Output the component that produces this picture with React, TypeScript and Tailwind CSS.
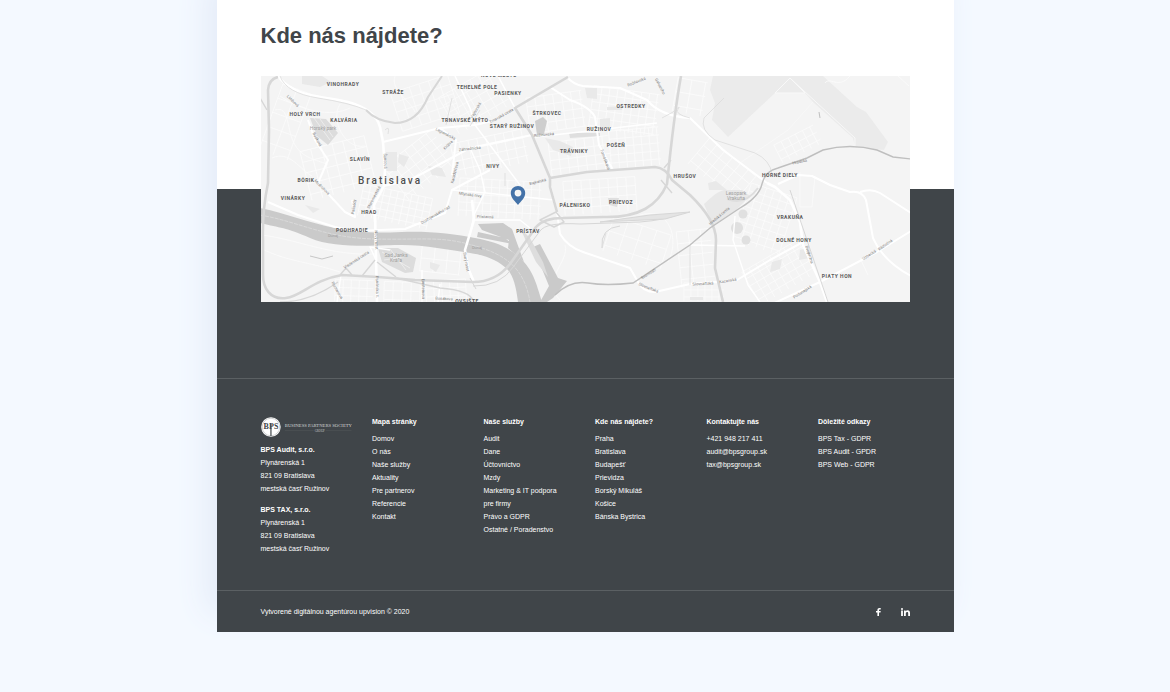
import type { ReactNode } from "react";

type Label = { text: string; x: number; y: number };

const districts: Label[] = [
    { text: "VINOHRADY", x: 343, y: 86 },
    { text: "STRÁŽE", x: 393, y: 94 },
    { text: "TEHELNÉ POLE", x: 477, y: 89 },
    { text: "PASIENKY", x: 508, y: 95 },
    { text: "HOLÝ VRCH", x: 305, y: 116 },
    { text: "KALVÁRIA", x: 344, y: 122 },
    { text: "TRNAVSKÉ MÝTO", x: 465, y: 122 },
    { text: "STARÝ RUŽINOV", x: 512, y: 128 },
    { text: "ŠTRKOVEC", x: 547, y: 115 },
    { text: "OSTREDKY", x: 631, y: 108 },
    { text: "RUŽINOV", x: 599, y: 131 },
    { text: "POŠEŇ", x: 616, y: 147 },
    { text: "TRÁVNIKY", x: 574, y: 153 },
    { text: "SLAVÍN", x: 360, y: 161 },
    { text: "NIVY", x: 493, y: 168 },
    { text: "BÔRIK", x: 306, y: 182 },
    { text: "VINÁRKY", x: 293, y: 200 },
    { text: "HRAD", x: 369, y: 214 },
    { text: "PODHRADIE", x: 352, y: 232 },
    { text: "PRÍSTAV", x: 528, y: 233 },
    { text: "PÁLENISKO", x: 575, y: 207 },
    { text: "PRIEVOZ", x: 621, y: 204 },
    { text: "HRUŠOV", x: 685, y: 178 },
    { text: "HORNÉ DIELY", x: 780, y: 177 },
    { text: "VRAKUŇA", x: 790, y: 219 },
    { text: "DOLNÉ HONY", x: 794, y: 242 },
    { text: "PIATY HON", x: 837, y: 278 },
    { text: "NOVÉ MESTO", x: 499, y: 77 },
    { text: "OVSIŠTE", x: 467, y: 303 },
];

const streets: (Label & { angle: number })[] = [
    { text: "Limbová", x: 292, y: 102, angle: 45 },
    { text: "Búdková", x: 316, y: 140, angle: 62 },
    { text: "Mudroňova", x: 321, y: 188, angle: 45 },
    { text: "Šancová", x: 384, y: 161, angle: 88 },
    { text: "Legionárska", x: 445, y: 135, angle: 27 },
    { text: "Krížna", x: 449, y: 146, angle: -45 },
    { text: "Záhradnícka", x: 470, y: 150, angle: -6 },
    { text: "Karadžičova", x: 456, y: 173, angle: -76 },
    { text: "Palisády", x: 355, y: 207, angle: -82 },
    { text: "Staromestská", x: 375, y: 198, angle: -62 },
    { text: "Dostojevského rad", x: 436, y: 216, angle: -30 },
    { text: "Mlynské nivy", x: 470, y: 196, angle: 7 },
    { text: "Prístavná", x: 485, y: 218, angle: 2 },
    { text: "Viedenská cesta", x: 357, y: 261, angle: -33 },
    { text: "Nový most", x: 375, y: 240, angle: 88 },
    { text: "Panónska c.", x: 376, y: 287, angle: 89 },
    { text: "Einsteinova", x: 422, y: 289, angle: 89 },
    { text: "Starý most", x: 465, y: 262, angle: 80 },
    { text: "Bosákova", x: 444, y: 300, angle: 3 },
    { text: "Romanova", x: 336, y: 291, angle: 60 },
    { text: "Vajnorská", x: 477, y: 111, angle: -60 },
    { text: "Trnavská cesta", x: 502, y: 117, angle: -29 },
    { text: "Tomášikova", x: 604, y: 160, angle: 70 },
    { text: "Ružinovská", x: 544, y: 136, angle: -5 },
    { text: "Bajkalská", x: 538, y: 183, angle: -14 },
    { text: "Rožňavská", x: 637, y: 83, angle: -22 },
    { text: "Galvaniho", x: 659, y: 87, angle: 62 },
    { text: "Hradská", x: 800, y: 163, angle: -12 },
    { text: "Hradská cesta", x: 720, y: 217, angle: -40 },
    { text: "Slovnaftská", x: 648, y: 289, angle: 22 },
    { text: "Svornosti", x: 649, y: 275, angle: -33 },
    { text: "Slovnaftská", x: 703, y: 285, angle: -3 },
    { text: "Kazanská", x: 728, y: 282, angle: -9 },
    { text: "Dvojkrížna", x: 808, y: 255, angle: 72 },
    { text: "Uzbecká", x: 870, y: 256, angle: -33 },
    { text: "Ráztočná", x: 886, y: 246, angle: -35 },
    { text: "Podunajská", x: 803, y: 293, angle: -33 },
];

// neighbourhood street grids: centre, size, rotation and step between streets
const grids = [
    { x: 285, y: 122, w: 30, h: 70, angle: 20, step: 15 },
    { x: 338, y: 168, w: 66, h: 50, angle: -14, step: 11 },
    { x: 395, y: 207, w: 70, h: 32, angle: 12, step: 7 },
    { x: 420, y: 165, w: 60, h: 42, angle: -38, step: 9 },
    { x: 425, y: 103, w: 60, h: 40, angle: -18, step: 10 },
    { x: 475, y: 101, w: 60, h: 42, angle: -30, step: 9 },
    { x: 490, y: 153, w: 74, h: 34, angle: -12, step: 9 },
    { x: 500, y: 199, w: 82, h: 38, angle: 3, step: 8 },
    { x: 556, y: 112, w: 56, h: 36, angle: -8, step: 9 },
    { x: 624, y: 111, w: 66, h: 42, angle: 8, step: 8 },
    { x: 580, y: 156, w: 60, h: 34, angle: -7, step: 9 },
    { x: 635, y: 148, w: 50, h: 38, angle: -5, step: 8 },
    { x: 600, y: 196, w: 72, h: 34, angle: -4, step: 9 },
    { x: 637, y: 243, w: 60, h: 36, angle: 18, step: 15 },
    { x: 690, y: 97, w: 30, h: 34, angle: 10, step: 14 },
    { x: 722, y: 170, w: 60, h: 34, angle: 40, step: 10 },
    { x: 798, y: 144, w: 44, h: 20, angle: -27, step: 8 },
    { x: 765, y: 219, w: 48, h: 60, angle: 18, step: 8 },
    { x: 780, y: 272, w: 66, h: 38, angle: -30, step: 8 },
    { x: 696, y: 258, w: 34, h: 56, angle: -6, step: 12 },
    { x: 704, y: 292, w: 40, h: 18, angle: 0, step: 7 },
    { x: 354, y: 291, w: 38, h: 22, angle: 2, step: 8 },
    { x: 402, y: 292, w: 36, h: 20, angle: 2, step: 9 },
    { x: 446, y: 291, w: 40, h: 22, angle: -3, step: 8 },
    { x: 441, y: 260, w: 40, h: 26, angle: 6, step: 13 },
];

function gridPath(w: number, h: number, step: number) {
    let d = "";
    for (let x = -w / 2; x <= w / 2; x += step) d += `M${x} ${-h / 2}V${h / 2}`;
    for (let y = -h / 2; y <= h / 2; y += step) d += `M${-w / 2} ${y}H${w / 2}`;
    return d;
}

function CityMap() {
    return (
        <svg
            viewBox="261 76 649 226"
            role="img"
            aria-label="Mapa Bratislavy"
            className="block h-auto w-full font-[Roboto,sans-serif]"
        >
            <rect x="260" y="76" width="651" height="226" fill="#f4f4f4" />

            {/* airport */}
            <path
                fill="#ebebeb"
                d="M713 76H823L857 107L866 112L888 142L884 150L855 147L853 138L813 102L805 93H775L728 137L712 120L715 103L710 90Z"
            />
            <path fill="none" stroke="#f8f8f8" d="M775 93L790 78L805 93M790 78L855 138V147M813 102L788 130L740 163M775 93H805" />

            {/* side streets */}
            <g fill="none" stroke="#fbfbfb" strokeWidth="0.8">
                {grids.map((g) => (
                    <path
                        key={`${g.x}-${g.y}`}
                        d={gridPath(g.w, g.h, g.step)}
                        transform={`translate(${g.x} ${g.y}) rotate(${g.angle})`}
                    />
                ))}
                <path d="M275 110C290 105 286 130 295 145S320 160 328 165M280 96C300 110 330 118 350 108M272 158C290 150 300 170 312 176M340 104C330 120 345 150 365 146M262 235C300 240 330 256 375 254M395 76C390 90 410 100 415 112M264 250C290 262 310 262 340 272M640 215C670 206 680 240 668 262M565 245C570 262 540 280 560 300M800 172V207H812L815 176M825 83C830 76 838 90 850 76M898 76L909 86M860 258L868 275" />
            </g>

            {/* parks and built-up blocks */}
            <path fill="#e8e8e8" d="M704 204C711 198 716 192 724 190H742L750 196L735 211L713 226Z" />
            <path fill="none" stroke="#dedede" strokeWidth="2" d="M727 199Q745 206 758 188" />
            <path fill="#dcdcdc" d="M310 118L326 119L338 133L328 145L317 136Z" />
            <path fill="#dcdcdc" d="M378 248L398 248L416 258L413 272L405 273L382 262Z" />
            <path fill="none" stroke="#f0f0f0" strokeWidth="0.8" d="M314 118L330 140M320 119L333 137M382 252L410 268M390 249L406 270M384 260L408 256" />
            <path fill="#e9e9e9" d="M302 76H322L331 82L320 87L302 84ZM386 152H397V171H385ZM428 166L442 168L446 177L432 175ZM585 88H597V99L587 98ZM545 138L560 141L573 147L571 156L553 150ZM600 119L610 118V127H600ZM607 107L622 106V110H607ZM399 154L409 157L404 167L398 162ZM430 262L440 265L436 272L430 268ZM772 262L782 259L780 269L770 272ZM800 250L810 247V258L799 260ZM690 300H703V297H690ZM305 205L320 209L313 213ZM708 183L716 181L727 190H709Z" />
            <path fill="#cecece" d="M535 121L543 117L547 121L544 134L537 135Z" />
            <path fill="#dfdfdf" d="M569 133H600V136L570 138ZM608 198H619L617 207L609 205Z" />
            <g fill="#e0e0e0">
                <circle cx="743" cy="214" r="4.5" />
                <circle cx="737" cy="228" r="6" />
                <circle cx="746" cy="240" r="4.5" />
            </g>

            {/* Danube and the harbour basins */}
            <path
                fill="#cacaca"
                d="M260 208C285 213 310 223 335 228S375 233 402 232S455 234 475 238S507 246 520 258S536 282 542 302H518C516 286 513 274 506 268S490 256 470 253S425 245 402 245S335 249 310 238S280 228 260 223Z"
            />
            <path
                fill="#cacaca"
                d="M478 224L503 223L512 229L517 243L524 262L508 248L509 240L482 230ZM478 232L505 238L512 244L477 237ZM533 247L540 244L558 278L567 281L553 298L547 302H540L549 286Z"
            />
            <path fill="#dddddd" d="M520 228L530 238L543 262L548 277L536 262Z" />
            <path
                fill="none"
                stroke="#e0e0e0"
                strokeDasharray="4 1"
                strokeWidth="0.7"
                d="M260 215C300 222 325 238 375 239S440 236 472 245S524 266 530 302"
            />

            {/* main roads */}
            <g fill="none" stroke="#ffffff" strokeWidth="2" strokeLinejoin="round">
                <path d="M278 76Q284 84 292 88C308 98 330 97 348 102S377 115 380 127L383 142L385 170L384 186L374 205L375 222" strokeWidth="2.6" />
                <path d="M383 142L440 128L475 125L492 121M440 128L456 140L452 175" />
                <path d="M308 120L315 140L328 160L318 183L345 212L355 217L352 200" />
                <path d="M268 202L298 215L335 227L355 231L405 229L445 213L452 190L490 170M384 186L410 180L470 148L532 135" />
                <path d="M375 212L377 302M472 200L474 220L465 250L468 268L474 282" strokeWidth="2.6" />
                <path d="M470 148L480 170L485 192L474 215L470 235M475 220L520 220L530 228M452 190L486 193L554 200" strokeWidth="1.4" />
                <path d="M498 76L515 108M455 76L470 108L475 125M475 125L520 185" strokeWidth="1.5" />
                <path d="M550 87L570 100Q590 107 595 117L599 145L613 170M567 77Q574 85 583 86L620 88L647 100Q660 116 690 118L723 150L767 183" />
                <path d="M535 137L580 132L657 123" strokeWidth="1.6" />
                <path d="M550 185L557 212L560 234Q568 247 583 252L630 268L638 282Q643 292 655 292L690 284L737 280L770 260L803 242" />
                <path d="M767 183L775 187L790 200L800 222L803 245L820 282L827 302" strokeWidth="2.6" />
                <path d="M911 231L877 252L820 282L770 305M778 184L798 175L812 176L830 185L850 192Q862 190 866 200L873 238Q883 261 911 276M860 192Q871 188 880 193L911 213" />
                <path d="M735 216L733 240L748 285L760 302M690 245L745 246M377 262L370 247L390 250M337 302L341 275M422 270V302M438 302L440 284" strokeWidth="1.4" />
            </g>

            {/* motorways */}
            <g fill="none" stroke="#d7d7d7" strokeWidth="2.6" strokeLinejoin="round">
                <path d="M278 77Q269 79 268 90L269 130L268 183Q262 212 263 240V275C263 288 270 300 286 298S312 280 342 275L378 277L415 280L473 282Q496 282 510 264L536 227Q544 218 563 218L603 217C640 218 658 205 667 184Q674 115 681 76" />
                <path d="M442 76L428 97Q417 123 395 123Q376 121 366 110" strokeWidth="2" />
                <path d="M568 77L515 108L532 135L550 178V187L557 212M550 178L587 172L655 167Q666 168 672 180L690 195Q716 220 716 240L715 268L723 302" />
                <path d="M260 98L267 110M375 260L362 276M377 262L396 277M340 275L346 268L352 275M664 168L671 160M661 180L672 193M540 220L556 212L564 222L554 227Z" strokeWidth="1.4" />
                <path d="M473 286Q500 287 514 266L540 231Q546 222 580 224L640 222Q665 220 680 214M470 278L476 289M790 190L828 302M602 248Q600 228 620 226" strokeWidth="1" />
                <path d="M396 278L440 288Q470 290 474 302M280 302Q310 302 338 282" strokeWidth="1.4" />
                <path d="M600 222L650 215L690 212L665 219Z" fill="#e4e4e4" strokeWidth="1" />
            </g>
            <g fill="none" stroke="#dcdcdc" strokeWidth="0.8">
                <path d="M366 110Q350 103 318 98T280 76M724 98L704 118Q700 130 715 140L755 153Q770 160 772 174M690 245V285M662 118L673 112Q682 104 678 109T690 118M505 173V186M480 110L470 126M452 98L446 125M602 248L606 233M385 130Q390 125 388 134" />
                <path d="M310 256L322 259L333 256" stroke="#bbbbbb" />
            </g>
            <g fill="none" stroke="#bfbfbf" strokeWidth="1.4">
                <path d="M555 295Q570 280 588 283T633 283L690 245L710 228L740 208Q759 197 762 184T778 168L807 158L823 150Q850 143 877 150L893 157L911 159" />
                <path d="M819 112L820 118" strokeWidth="1" />
            </g>

            <g fill="#7c7c7c" fontSize="4" textAnchor="middle">
                {streets.map((s) => (
                    <text key={`${s.text}-${s.x}`} transform={`translate(${s.x} ${s.y}) rotate(${s.angle})`}>
                        {s.text}
                    </text>
                ))}
            </g>
            <g fill="#a0a0a0" fontSize="5" textAnchor="middle">
                <text x="323" y="130">Horský park</text>
                <text x="396" y="257">Sad Janka</text>
                <text x="396" y="262">Kráľa</text>
                <text x="736" y="195">Lesopark</text>
                <text x="736" y="200">Vrakuňa</text>
                <text x="333" y="237" fontSize="4">Dunaj</text>
                <text x="477" y="249" fontSize="4">Dunaj</text>
            </g>
            <g
                className="tracking-widest"
                fill="#585858"
                fontSize="5"
                fontWeight="700"
                textAnchor="middle"
            >
                {districts.map((d) => (
                    <text key={d.text} x={d.x} y={d.y}>
                        {d.text}
                    </text>
                ))}
            </g>
            <text
                x="390"
                y="184"
                className="tracking-[2px]"
                fill="#4f4f4f"
                fontSize="10"
                fontWeight="500"
                textAnchor="middle"
            >
                Bratislava
            </text>

            <path
                fill="#4472a8"
                fillRule="evenodd"
                d="M518 186C514 186 510.800 189 510.800 193C510.800 198 515 201 518 205C521 201 525.200 198 525.200 193C525.200 189 522 186 518 186ZM518 189.700A3.400 3.400 0 1 1 518 196.500A3.400 3.400 0 1 1 518 189.700Z"
            />
        </svg>
    );
}

function Logo() {
    return (
        <a href="#" aria-label="BPS" className="block">
            <svg viewBox="0 0 92 20" className="block h-5 w-full font-['Liberation_Serif',serif]">
                <circle cx="10" cy="10" r="9.800" fill="#ffffff" />
                <circle cx="10" cy="10" r="8.800" fill="none" stroke="#8a8d90" strokeWidth="0.4" />
                <path d="M10 7V19" stroke="#404549" strokeWidth="1.200" />
                <text x="2.500" y="12" fontSize="8" fontWeight="700" fill="#404549">
                    B
                </text>
                <text x="8" y="12" fontSize="8" fontWeight="700" fill="#404549">
                    P
                </text>
                <text x="13" y="12" fontSize="8" fontWeight="700" fill="#404549">
                    S
                </text>
                <text x="24" y="10" fontSize="4.700" fill="#d4d6d7">
                    BUSINESS PARTNERS SOCIETY
                </text>
                <path d="M24 13.500H53M65 13.500H91" stroke="#54595c" strokeWidth="0.5" />
                <text x="59" y="15" fontSize="3" fill="#c4c6c7" textAnchor="middle">
                    GROUP
                </text>
            </svg>
        </a>
    );
}

function Address({ name }: { name: string }) {
    return (
        <address className="mb-2 not-italic">
            <strong className="block">{name}</strong>
            Plynárenská 1<br />
            821 09 Bratislava
            <br />
            mestská časť Ružinov
        </address>
    );
}

const columns: { title: string; links: ReactNode[] }[] = [
    {
        title: "Mapa stránky",
        links: ["Domov", "O nás", "Naše služby", "Aktuality", "Pre partnerov", "Referencie", "Kontakt"],
    },
    {
        title: "Naše služby",
        links: [
            "Audit",
            "Dane",
            "Účtovníctvo",
            "Mzdy",
            <>
                Marketing & IT podpora
                <br />
                pre firmy
            </>,
            "Právo a GDPR",
            "Ostatné / Poradenstvo",
        ],
    },
    {
        title: "Kde nás nájdete?",
        links: ["Praha", "Bratislava", "Budapešť", "Prievidza", "Borský Mikuláš", "Košice", "Bánska Bystrica"],
    },
    {
        title: "Kontaktujte nás",
        links: ["+421 948 217 411", "audit@bpsgroup.sk", "tax@bpsgroup.sk"],
    },
    {
        title: "Dôležité odkazy",
        links: ["BPS Tax - GDPR", "BPS Audit - GPDR", "BPS Web - GDPR"],
    },
];

function Footer() {
    return (
        <footer className="bg-[#404549] pt-[189px] text-[7px] leading-[13px] text-white">
            <div className="grid grid-cols-6 gap-5 border-t border-[#5b6063] px-11 pt-9 pb-[27px]">
                <div className="pt-[2px]">
                    <Logo />
                    <div className="mt-[6px]">
                        <Address name="BPS Audit, s.r.o." />
                        <Address name="BPS TAX, s.r.o." />
                    </div>
                </div>
                {columns.map((column) => (
                    <nav key={column.title} aria-label={column.title}>
                        <h3 className="mb-1 font-bold">{column.title}</h3>
                        <ul>
                            {column.links.map((link, i) => (
                                <li key={i}>
                                    <a href="#" className="block hover:underline">
                                        {link}
                                    </a>
                                </li>
                            ))}
                        </ul>
                    </nav>
                ))}
            </div>
            <div className="flex items-center justify-between border-t border-[#5b6063] px-11 py-[14px]">
                <p>Vytvorené digitálnou agentúrou upvision © 2020</p>
                <div className="flex items-center gap-5">
                    <a href="#" aria-label="Facebook">
                        <svg viewBox="0 0 5 8" className="block h-2 w-[5px]" fill="#ffffff">
                            <path d="M1.400 8V4.500H0V3H1.400V2C1.400 .7 2.200 0 3.500 0H4.700V1.400H3.900C3.200 1.400 3 1.700 3 2.200V3H4.700L4.500 4.500H3V8Z" />
                        </svg>
                    </a>
                    <a href="#" aria-label="LinkedIn">
                        <svg viewBox="0 0 9 8" className="block h-2 w-[9px]" fill="#ffffff">
                            <circle cx="1" cy="1" r="1" />
                            <path d="M.1 2.500H1.900V8H.1ZM3 2.500H4.700V3.200C5.100 2.600 5.700 2.300 6.500 2.300C8.400 2.300 9 3.500 9 5.100V8H7.200V5.400C7.200 4.600 7.100 3.900 6.100 3.900S4.800 4.700 4.800 5.400V8H3Z" />
                        </svg>
                    </a>
                </div>
            </div>
        </footer>
    );
}

export default function App() {
    return (
        <div className="min-h-screen bg-[#f4f9ff] pb-[60px] font-['Liberation_Sans',Arial,sans-serif]">
            <main className="mx-auto max-w-[737px] bg-white shadow-[-10px_-20px_30px_#e4ebf8]">
                <section className="px-11 pt-5">
                    <h2 className="text-[22px] leading-8 font-bold text-[#404549]">Kde nás nájdete?</h2>
                    <div className="relative -mb-[113px] pt-6">
                        <CityMap />
                    </div>
                </section>
                <Footer />
            </main>
        </div>
    );
}
